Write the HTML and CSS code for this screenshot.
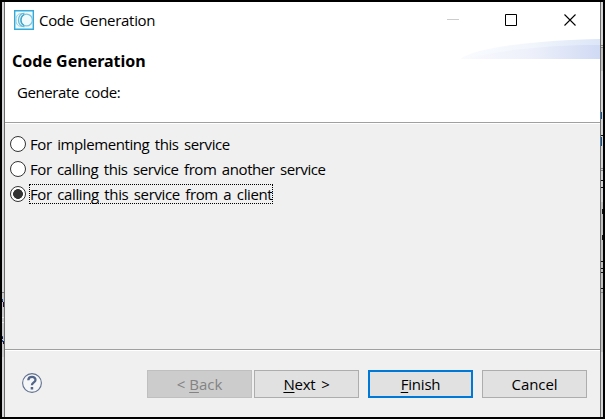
FILE: index.html
```html
<!DOCTYPE html>
<html lang="en">
<head>
<meta charset="utf-8">
<title>Code Generation</title>
<link rel="stylesheet" href="styles.css">
</head>
<body>
<div class="desktop">
  <svg class="edge" width="2" height="415" viewBox="0 0 2 415" shape-rendering="crispEdges" aria-hidden="true">
    <path fill="#d7d7d9" d="M0 0h2v415H0z"/>
    <path fill="#c9c9cc" d="M0 290h2v65H0z"/>
    <path fill="#777" d="M0 290h2v1H0z"/>
    <path fill="#0b559f" d="M0 297h1v2H0zM0 334h1v1H0zM0 338h1v2H0z"/>
    <path fill="#281030" d="M0 299h1v1H0zM1 300h1v5H1zM0 335h1v2H0zM1 339h1v3H1z"/>
    <path fill="#e8e8e8" d="M0 315h2v1H0zM0 320h2v1H0z"/>
  </svg>
  <main class="dialog">
    <header class="header">
      <div class="titlebar">
        <svg class="app-icon" width="20" height="20" viewBox="0 0 20 20" fill="none">
          <path stroke="#35a9d8" stroke-width="1.4" fill="#f0fafd" d="M.7.7h18.6v18.6H.7z"/>
          <path stroke="#8ccce2" d="M8 4C4 3 2 6 2 10s2 7 6 6"/>
          <path stroke="#6bbad6" stroke-width="1.3" d="M10.500 3.500C7 3 4.500 6 4.500 10s2.500 7 6 6.500"/>
          <circle cx="12.500" cy="10" r="5.900" stroke="#7fc5dc" stroke-width="1.300"/>
          <path stroke="#3fa5c9" stroke-width="1.200" d="M10 4.500C6 7 6 13 10 15.500"/>
        </svg>
        <span class="caption">Code Generation</span>
        <svg class="controls" width="130" height="12" viewBox="0 0 130 12" fill="none">
          <path fill="#ccc" d="M0 5h12v1H0z"/>
          <path stroke="#000" d="M58.500.5h11v11h-11z"/>
          <path stroke="#000" stroke-width="1.100" d="M117.500.5l11 11M128.500.5l-11 11"/>
        </svg>
      </div>
      <svg class="swoosh" width="140" height="20" viewBox="0 0 140 20">
        <defs>
          <linearGradient id="outer"><stop stop-color="#f9fbfe"/><stop offset=".5" stop-color="#f2f6fc"/><stop offset="1" stop-color="#dce6f7"/></linearGradient>
          <linearGradient id="inner"><stop stop-color="#f9fafe"/><stop offset=".5" stop-color="#edf0fa"/><stop offset="1" stop-color="#d0daf4"/></linearGradient>
        </defs>
        <path fill="url(#outer)" d="M0 20C18 7 85 1 140 0v20z"/>
        <path fill="url(#inner)" d="M4 20C45 10 92 6 140 6v14z"/>
      </svg>
      <h1 class="title">Code Generation</h1>
      <p class="description">Generate code:</p>
    </header>
    <section class="options">
      <label class="option"><i class="radio"></i><span class="label implementing">For implementing this service</span></label>
      <label class="option"><i class="radio"></i><span class="label another">For calling this service from another service</span></label>
      <label class="option"><i class="radio checked"></i><span class="label client focused">For calling this service from a client</span></label>
    </section>
    <footer class="footer">
      <svg class="help" width="20" height="20" viewBox="0 0 20 20" fill="none">
        <circle cx="10" cy="10" r="9.400" fill="#f5f6f8" stroke="#60708f" stroke-width="1.100"/>
        <path stroke="#526589" stroke-width="2.300" d="M6.300 7.300C6.500 2.800 13.700 3 13.500 7c-.1 2.500-3.600 2.300-3.600 5.300"/>
        <path fill="#526589" d="M8.700 14h2.500v2.500H8.700z"/>
      </svg>
      <button class="button back" disabled>&lt; <u>B</u>ack</button>
      <button class="button next"><u>N</u>ext &gt;</button>
      <button class="button finish"><u>F</u>inish</button>
      <button class="button cancel">Cancel</button>
    </footer>
  </main>
  <svg class="edge" width="2" height="415" viewBox="0 0 2 415" shape-rendering="crispEdges" aria-hidden="true">
    <path fill="#d6d6d8" d="M0 0h2v415H0z"/>
    <path fill="#c2c2c2" d="M0 46h2v23H0zM0 200h2v150H0z"/>
    <path fill="#888" d="M0 43h2v1H0zM0 45h2v1H0zM0 166h2v1H0zM0 168h2v1H0zM0 290h2v1H0z"/>
    <path fill="#07549d" d="M0 110h1v7H0zM0 135h1v9H0z"/>
    <path fill="#111" d="M0 133h2v1H0zM0 178h2v1H0zM0 185h2v1H0zM1 207h1v5H1zM1 233h1v5H1zM0 259h2v1H0zM0 266h2v1H0zM0 270h2v1H0zM0 286h2v1H0z"/>
  </svg>
</div>
</body>
</html>
```

FILE: styles.css
```css
* { box-sizing: border-box; }
body { margin: 0; font-family: "Open Sans", "Noto Sans", sans-serif; font-size: 15px; color: #000; }
.desktop { display: flex; width: 605px; height: 419px; border: 2px solid #000; background: #d7d7d9; }
.edge { display: block; flex: none; }
.dialog { display: flex; flex-direction: column; width: 597px; height: 415px; border: solid #6c6c6c; border-width: 0 1px; background: #f0f0f0; }
.header { display: flex; flex-direction: column; height: 121px; flex: none; background: #fff; border-bottom: 1px solid #a0a0a0; }
.titlebar { display: flex; align-items: center; height: 36px; flex: none; padding: 0 23px 0 9px; }
.caption { margin-left: 5px; letter-spacing: -.3px; word-spacing: 2px; }
.controls { margin-left: auto; }
.swoosh { align-self: flex-end; flex: none; margin-top: 1px; }
.title { margin: -9px 0 0 7px; font-family: "Noto Sans", sans-serif; font-size: 16px; line-height: 22px; font-weight: 700; }
.description { margin: 10px 0 0 12px; line-height: 20px; letter-spacing: -.4px; word-spacing: 2px; }
.options { height: 227px; padding: 12px 0 0 5px; border-top: 1px solid #fff; border-bottom: 1px solid #a0a0a0; flex: none; }
.option { display: flex; align-items: flex-start; height: 25px; gap: 3px; }
.radio { width: 16px; height: 16px; flex: none; border: 1px solid #333; border-radius: 50%; background: #fff; }
.checked { background: radial-gradient(circle, #333 0 4.600px, #fff 5.200px); }
.label { height: 20px; margin-top: -2px; line-height: 20px; padding-left: 1px; white-space: nowrap; word-spacing: 2px; }
.implementing { letter-spacing: -.41px; }
.another { letter-spacing: -.43px; }
.client { letter-spacing: -.38px; }
.focused { width: 244px; outline: 1px dotted #000; outline-offset: -1px; }
.footer { display: flex; align-items: flex-start; flex: 1; padding: 19px 13px 0 17px; border-top: 1px solid #fff; }
.help { margin: 3px 105px 0 0; flex: none; }
.button { width: 105px; height: 28px; flex: none; padding: 0; border: 1px solid #adadad; background: #e1e1e1; color: #000; font: inherit; line-height: 24px; }
.button u { text-underline-offset: 2px; text-decoration-thickness: 1px; }
.back { background: #ccc; border-color: #bfbfbf; color: #838383; }
.next { margin-left: 2px; word-spacing: 2px; letter-spacing: -.2px; }
.finish { margin-left: 9px; border: 2px solid #0078d7; letter-spacing: -.2px; }
.cancel { margin-left: 9px; letter-spacing: -.1px; }
```
